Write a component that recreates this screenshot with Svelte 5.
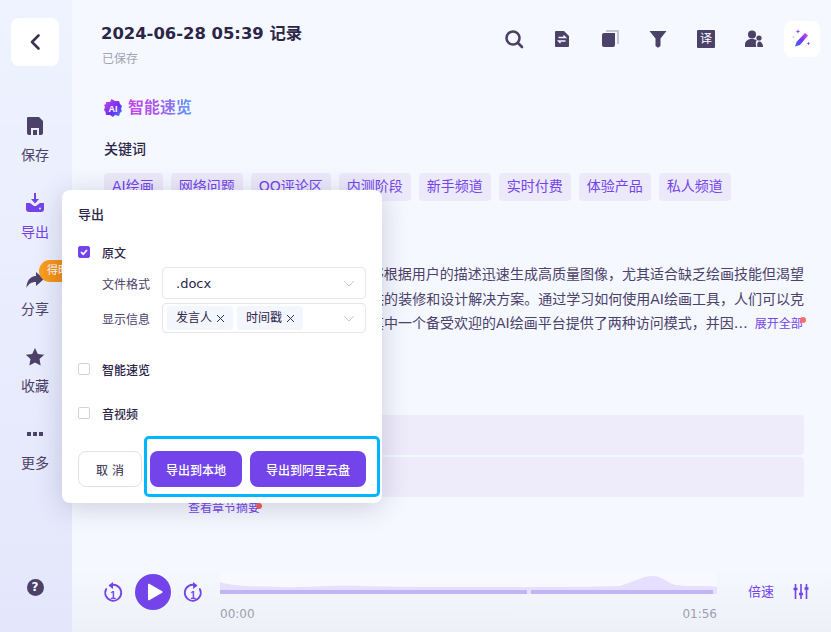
<script>
    const tags = ["AI绘画", "网络问题", "QQ评论区", "内测阶段", "新手频道", "实时付费", "体验产品", "私人频道"];
    const chips = ["发言人", "时间戳"];
    const ink = "#4b4169";
</script>

<div class="page">
    <aside class="side">
        <button class="back" aria-label="返回">
            <svg width="14" height="18" viewBox="0 0 14 18"><path d="M10.500 2.500 4 9l6.500 6.500" fill="none" stroke="#3a3155" stroke-width="2.600" stroke-linecap="round" stroke-linejoin="round" /></svg>
        </button>

        <nav class="nav">
            <div class="item">
                <svg width="20" height="20" viewBox="0 0 20 20"><path fill={ink} d="M3 1h11l4 4v12a2 2 0 0 1-2 2h-2v-7H6v7H4a2 2 0 0 1-2-2V2a1 1 0 0 1 1-1Zm5 13h4v5H8z" /></svg>
                <span>保存</span>
            </div>
            <div class="item active">
                <svg width="20" height="20" viewBox="0 0 20 20"><path fill="#7344ea" d="M9 0h2v6h3l-4 4.500L6 6h3ZM1 10h4l4 3h2l4-3h4v6a3 3 0 0 1-3 3H4a3 3 0 0 1-3-3Zm14 4.500a1 1 0 1 0 0 2 1 1 0 0 0 0-2Z" /></svg>
                <span>导出</span>
            </div>
            <div class="item">
                <svg width="20" height="20" viewBox="0 0 20 20"><path fill={ink} d="M11 2l8 7-8 7v-4C6 12 3.500 14 1.500 18 1.500 11 5 6.500 11 6Z" /></svg>
                <span>分享</span>
                <em class="badge">得时长</em>
            </div>
            <div class="item">
                <svg width="20" height="20" viewBox="0 0 20 20"><path fill={ink} d="m10 1 2.800 5.900 6.400.8-4.700 4.400 1.200 6.400L10 15.400l-5.700 3.100 1.200-6.400L.8 7.700l6.400-.8Z" /></svg>
                <span>收藏</span>
            </div>
            <div class="item">
                <svg width="20" height="20" viewBox="0 0 20 20"><path fill={ink} d="M2 8h4v4H2zm6 0h4v4H8zm6 0h4v4h-4z" /></svg>
                <span>更多</span>
            </div>
        </nav>

        <div class="help">?</div>
    </aside>

    <main class="main">
        <header class="top">
            <div>
                <h1>2024-06-28 05:39 记录</h1>
                <p class="saved">已保存</p>
            </div>
            <div class="tools">
                <svg width="20" height="20" viewBox="0 0 20 20"><circle cx="9" cy="9" r="6.500" fill="none" stroke={ink} stroke-width="2.600" /><path d="m14 14 4 4" stroke={ink} stroke-width="2.600" stroke-linecap="round" /></svg>
                <svg width="20" height="20" viewBox="0 0 20 20"><path fill={ink} d="M4 2h8l5 5v10a1 1 0 0 1-1 1H4a1 1 0 0 1-1-1V3a1 1 0 0 1 1-1Z" /><path d="M6.500 8.500h7l-2-2M13.500 12h-7l2 2" fill="none" stroke="#f5f8ff" stroke-width="1.300" /></svg>
                <svg width="20" height="20" viewBox="0 0 20 20"><path d="M6 2h12v13" fill="none" stroke="#b9b4cc" stroke-width="1.500" /><path fill={ink} d="M4 4h11v12a2 2 0 0 1-2 2H4a2 2 0 0 1-2-2V6a2 2 0 0 1 2-2Z" /></svg>
                <svg width="20" height="20" viewBox="0 0 20 20"><path fill={ink} d="M1.500 2h17l-6 7.500V17l-2 1.500H9.500l-2-1.500V9.500Z" /></svg>
                <span class="yi">译</span>
                <svg width="20" height="20" viewBox="0 0 20 20"><circle cx="8" cy="5.500" r="4" fill={ink} /><path fill={ink} d="M1 18v-2.500C1 12 4 10 8 10c2 0 3.500.5 4.700 1.500-1 1-1.200 3-.4 6.500Z" /><circle cx="15" cy="9" r="2.600" fill={ink} /><path fill={ink} d="M13.500 18c-.6-2.500-.4-5 1.500-5.500 2 0 4 2 4 5.500Z" /></svg>
                <div class="magic">
                    <svg width="20" height="20" viewBox="0 0 20 20">
                        <defs>
                            <linearGradient id="pen" x1="0" y1="1" x2="1" y2="0">
                                <stop offset="0" stop-color="#2f6df6" />
                                <stop offset="0.5" stop-color="#7a35f0" />
                                <stop offset="1" stop-color="#d04bf0" />
                            </linearGradient>
                        </defs>
                        <path fill="url(#pen)" d="M13 4l3 2.500L8 16l-5 1.500L4.500 13Z" />
                        <path fill="#8a3cf0" d="M6 0l.6 1.900L8.500 2.500 6.600 3.100 6 5 5.400 3.100 3.500 2.500 5.400 1.900ZM16.500 12.500l.5 1.500 1.500.5-1.500.5-.5 1.500-.5-1.500-1.500-.5 1.500-.5Z" />
                        <path fill="#d9b8fa" d="M1.500 6.500l.4 1.100 1.100.4-1.100.4-.4 1.100-.4-1.100L0 8l1.100-.4Z" />
                    </svg>
                </div>
            </div>
        </header>

        <div class="content">
            <div class="brand">
                <svg width="18" height="18" viewBox="0 0 18 18">
                    <defs>
                        <linearGradient id="ai" x1="0" y1="0" x2="1" y2="1">
                            <stop offset="0" stop-color="#d24be8" />
                            <stop offset="0.6" stop-color="#6a2ff0" />
                            <stop offset="1" stop-color="#3e8bf8" />
                        </linearGradient>
                    </defs>
                    <path fill="url(#ai)" d="M2 3h4l1.500-3L11 2h4l1 3 2 2-1 3 1 2-2 2-1 3-4-1-2 2-3-2H2l-.5-3L0 11l1-3-1-2 2-1Z" />
                    <text x="9" y="12.500" text-anchor="middle" class="ai-text">AI</text>
                </svg>
                <span>智能速览</span>
            </div>

            <h2>关键词</h2>
            <div class="tags">
                {#each tags as t}
                    <span class="tag">{t}</span>
                {/each}
            </div>

            <h2 class="sub">全文概要</h2>
            <p class="para">AI绘画技术正在改变人们的创作方式，它能够根据用户的描述迅速生成高质量图像，尤其适合缺乏绘画技能但渴望表达创意的用户，也能为家居和商业空间提供的装修和设计解决方案。通过学习如何使用AI绘画工具，人们可以克服技术门槛，获得更多新的收入来源途径。其中一个备受欢迎的AI绘画平台提供了两种访问模式，并因…<a class="more">展开全部<i></i></a></p>

            <h2 class="sub2">章节速览</h2>
            <div class="rows">
                <div class="row"></div>
                <div class="row"></div>
            </div>
            <a class="chapter">查看章节摘要<i></i></a>
        </div>

        <footer class="player">
            <svg class="skip" width="20" height="22" viewBox="0 0 20 22"><path d="M7 4.500A8 8 0 1 1 3.200 8" fill="none" stroke="#7344ea" stroke-width="1.800" stroke-linecap="round" /><path fill="#7344ea" d="M10 1v7L5.500 4.500Z" /><text x="10" y="17.500" text-anchor="middle" class="one">1</text></svg>
            <button class="play" aria-label="播放">
                <svg width="16" height="18" viewBox="0 0 16 18"><path fill="#fff" d="M1 1.500v15a.8.8 0 0 0 1.200.7l13-7.500a.8.8 0 0 0 0-1.400L2.200.8A.8.8 0 0 0 1 1.500Z" /></svg>
            </button>
            <svg class="skip" width="20" height="22" viewBox="0 0 20 22"><path d="M13 4.500A8 8 0 1 0 16.800 8" fill="none" stroke="#7344ea" stroke-width="1.800" stroke-linecap="round" /><path fill="#7344ea" d="M10 1v7l4.500-3.500Z" /><text x="10" y="17.500" text-anchor="middle" class="one">1</text></svg>

            <div class="track">
                <svg class="wave" width="497" height="22" viewBox="0 0 497 22">
                    <rect width="497" height="22" fill="#f8f8ff" />
                    <path fill="#e6dfff" d="M0 10C15 15 30 14 60 15S100 13 140 14 210 15 280 15 360 15 400 14C415 9 424 4 433 4 443 4 446 11 456 13S490 13 497 15V22H0Z" />
                    <rect y="18" width="497" height="4" fill="#c3b4f7" />
                    <rect x="307" y="18" width="4" height="4" fill="#e6dfff" />
                    <rect x="493" y="18" width="4" height="4" fill="#e6dfff" />
                </svg>
                <div class="times">
                    <span>00:00</span>
                    <span>01:56</span>
                </div>
            </div>

            <span class="speed">倍速</span>
            <svg class="eq" width="16" height="16" viewBox="0 0 16 16"><path d="M2.500 0v15M8 0v15M13.500 0v15" stroke="#7344ea" stroke-width="1.600" /><path d="M.5 5h4M6 10h4M11.500 4.500h4" stroke="#7344ea" stroke-width="2.600" /></svg>
        </footer>
    </main>

    <section class="pop">
        <h3>导出</h3>

        <label class="check"><span class="box on"><svg width="10" height="10" viewBox="0 0 10 10"><path d="m2 5 2.200 2.200L8 3" fill="none" stroke="#fff" stroke-width="1.700" /></svg></span>原文</label>
        <div class="field first">
            <span>文件格式</span>
            <div class="select">
                <span class="val">.docx</span>
                <svg class="arrow" width="12" height="7" viewBox="0 0 12 7"><path d="m1 1 5 5 5-5" fill="none" stroke="#c9c9d2" stroke-width="1" /></svg>
            </div>
        </div>
        <div class="field">
            <span>显示信息</span>
            <div class="select multi">
                {#each chips as c}
                    <span class="chip">{c}<svg width="9" height="9" viewBox="0 0 9 9"><path d="m1 1 7 7M8 1 1 8" stroke="#3a3155" stroke-width="1" /></svg></span>
                {/each}
                <svg class="arrow" width="12" height="7" viewBox="0 0 12 7"><path d="m1 1 5 5 5-5" fill="none" stroke="#c9c9d2" stroke-width="1" /></svg>
            </div>
        </div>

        <label class="check opt"><span class="box"></span>智能速览</label>
        <label class="check opt2"><span class="box"></span>音视频</label>

        <div class="actions">
            <button class="cancel">取 消</button>
            <button class="primary local">导出到本地</button>
            <button class="primary cloud">导出到阿里云盘</button>
        </div>
        <div class="mark"></div>
    </section>
</div>

<style>
    :global(body) {
        margin: 0;
    }

    .page {
        position: relative;
        display: flex;
        width: 831px;
        height: 632px;
        overflow: hidden;
        font-family: "DejaVu Sans", "Noto Sans CJK SC", sans-serif;
        color: #2c2548;
    }

    .side {
        width: 72px;
        flex: none;
        display: flex;
        flex-direction: column;
        align-items: center;
        background: linear-gradient(180deg, #eef3ff 0%, #e4e6fb 100%);
        padding: 18px 2px 0 0;
        box-sizing: border-box;
    }

    .back {
        width: 48px;
        height: 48px;
        border: none;
        border-radius: 8px;
        background: #fff;
        display: flex;
        align-items: center;
        justify-content: center;
        padding: 0;
    }

    .nav {
        margin-top: 50px;
        display: flex;
        flex-direction: column;
        gap: 25px;
    }

    .item {
        position: relative;
        height: 52px;
        display: flex;
        flex-direction: column;
        align-items: center;
        gap: 9px;
        font-size: 14px;
        line-height: 20px;
        color: #4b4169;
    }

    .item svg {
        flex: none;
    }

    .item.active {
        color: #7344ea;
    }

    .badge {
        position: absolute;
        left: 18px;
        top: -10px;
        width: 44px;
        height: 22px;
        padding-left: 8px;
        box-sizing: border-box;
        border-radius: 11px 0 0 11px;
        background: linear-gradient(90deg, #f9a020, #f07a0a);
        color: #fff;
        font-size: 11px;
        font-style: normal;
        line-height: 22px;
        white-space: nowrap;
        overflow: hidden;
    }

    .help {
        margin-top: auto;
        margin-bottom: 36px;
        width: 17px;
        height: 17px;
        border-radius: 50%;
        background: #4b4169;
        color: #fff;
        font-size: 12px;
        font-weight: 700;
        line-height: 17px;
        text-align: center;
    }

    .main {
        flex: 1;
        display: flex;
        flex-direction: column;
        min-width: 0;
        background: linear-gradient(180deg, #f5f8ff 90%, #eef0f8 100%);
    }

    .top {
        display: flex;
        justify-content: space-between;
        padding: 21px 11px 0 29px;
        height: 97px;
        box-sizing: border-box;
    }

    h1 {
        margin: 0;
        font-size: 16.400px;
        font-weight: 700;
        line-height: 26px;
        color: #2c2548;
    }

    .saved {
        margin: 3px 0 0 1px;
        font-size: 12px;
        line-height: 18px;
        color: #a5a3b5;
    }

    .tools {
        display: flex;
        align-items: center;
        height: 36px;
        gap: 28px;
    }

    .yi {
        width: 18px;
        height: 18px;
        margin: 0 1px;
        background: #4b4169;
        border-radius: 1px;
        color: #fff;
        font-size: 12px;
        line-height: 18px;
        text-align: center;
    }

    .magic {
        width: 36px;
        height: 36px;
        margin-left: -8px;
        border-radius: 8px;
        background: #fff;
        display: flex;
        align-items: center;
        justify-content: center;
    }

    .content {
        flex: 1;
        padding: 0 27px 0 32px;
        min-height: 0;
        position: relative;
    }

    .brand {
        display: flex;
        align-items: center;
        gap: 6px;
        height: 22px;
    }

    .brand span {
        font-size: 16px;
        font-weight: 700;
        line-height: 22px;
        background: linear-gradient(90deg, #c445e6, #a45cf0 50%, #5c9cf8);
        -webkit-background-clip: text;
        background-clip: text;
        color: transparent;
    }

    .ai-text {
        font-size: 9px;
        font-weight: 700;
        fill: #fff;
        font-family: "Liberation Sans", sans-serif;
    }

    h2 {
        margin: 18px 0 0;
        font-size: 14px;
        font-weight: 500;
        line-height: 24px;
        color: #2c2548;
    }

    .tags {
        display: flex;
        gap: 8px;
        margin-top: 12px;
    }

    .tag {
        height: 28px;
        padding: 0 8px;
        border-radius: 4px;
        background: #ece9fb;
        color: #7344ea;
        font-size: 14px;
        line-height: 27px;
        white-space: nowrap;
    }

    .tag:first-child {
        padding-right: 9px;
    }

    .sub {
        margin-top: 27px;
    }

    .para {
        margin: 10px 0 0;
        width: 700px;
        font-size: 14px;
        line-height: 24.500px;
        color: #4b4169;
        text-align: justify;
    }

    .more {
        position: relative;
        margin-left: 7px;
        font-size: 12px;
        color: #7344ea;
    }

    .more i {
        position: absolute;
        right: -3px;
        top: 0;
        width: 6px;
        height: 6px;
        border-radius: 50%;
        background: #ff6b6b;
    }

    .chapter i {
        position: absolute;
        right: -2px;
        top: 5px;
        width: 6px;
        height: 6px;
        border-radius: 50%;
        background: #f0605f;
    }

    .sub2 {
        margin-top: 48px;
    }

    .rows {
        display: flex;
        flex-direction: column;
        gap: 2px;
        margin-top: 6px;
    }

    .row {
        height: 40px;
        border-radius: 4px;
        background: #eeecfa;
    }

    .chapter {
        position: relative;
        display: inline-block;
        margin: 1px 0 0 84px;
        font-size: 12px;
        line-height: 20px;
        color: #7344ea;
    }

    .player {
        height: 61px;
        flex: none;
        display: flex;
        align-items: flex-start;
        padding: 0 23px 0 31px;
        box-sizing: border-box;
    }

    .skip {
        flex: none;
        margin-top: 10px;
    }

    .one {
        font-size: 10px;
        font-weight: 700;
        fill: #7344ea;
        font-family: "Liberation Sans", sans-serif;
    }

    .play {
        width: 36px;
        height: 36px;
        flex: none;
        margin: 3px 12px 0;
        padding: 0 0 0 3px;
        border: none;
        border-radius: 50%;
        background: #7344ea;
        display: flex;
        align-items: center;
        justify-content: center;
    }

    .track {
        width: 497px;
        margin: 1px 31px 0 17px;
        flex: none;
    }

    .wave {
        display: block;
    }

    .times {
        display: flex;
        justify-content: space-between;
        margin-top: 12px;
        font-size: 12px;
        line-height: 16px;
        color: #9f9db0;
    }

    .speed {
        flex: none;
        margin-top: 12px;
        margin-right: 19px;
        font-size: 13px;
        line-height: 18px;
        white-space: nowrap;
        color: #7344ea;
    }

    .eq {
        margin-top: 13px;
        flex: none;
    }

    /* export popover sits over the page */
    .pop {
        position: absolute;
        left: 62px;
        top: 190px;
        width: 320px;
        height: 313px;
        padding: 14px 16px 0;
        box-sizing: border-box;
        border-radius: 8px;
        background: #fff;
        box-shadow: 0 4px 28px rgba(40, 35, 80, 0.2);
    }

    h3 {
        margin: 0;
        font-size: 13px;
        font-weight: 500;
        line-height: 22px;
        color: #2c2548;
    }

    .check {
        display: flex;
        align-items: center;
        margin-top: 16px;
        height: 20px;
        font-size: 12px;
        font-weight: 500;
        color: #2c2548;
    }

    .box {
        width: 12px;
        height: 12px;
        margin-right: 12px;
        box-sizing: border-box;
        border: 1.500px solid #d3d1de;
        border-radius: 2px;
        display: flex;
        align-items: center;
        justify-content: center;
    }

    .box.on {
        background: #7344ea;
        border-color: #7344ea;
    }

    .field {
        display: flex;
        align-items: center;
        gap: 12px;
        margin: 4px 0 0 24px;
        font-size: 12px;
        color: #4b4169;
    }

    .field.first {
        margin-top: 5px;
    }

    .select {
        position: relative;
        flex: 1;
        height: 32px;
        border: 1px solid #e6e6ec;
        border-radius: 4px;
        box-sizing: border-box;
        display: flex;
        align-items: center;
        padding-left: 13px;
    }

    .multi {
        height: 30px;
        padding-left: 4px;
        gap: 4px;
    }

    .val {
        font-size: 13px;
        color: #2c2548;
    }

    .arrow {
        position: absolute;
        right: 10px;
        top: 50%;
        margin-top: -3px;
    }

    .chip {
        height: 24px;
        width: 66px;
        box-sizing: border-box;
        padding: 0 0 0 9px;
        border-radius: 4px;
        background: #f4f6fe;
        font-size: 12px;
        line-height: 24px;
        color: #2c2548;
        display: flex;
        align-items: center;
        gap: 4px;
    }

    .opt {
        margin-top: 26px;
    }

    .opt2 {
        margin-top: 24px;
    }

    .actions {
        display: flex;
        gap: 8px;
        margin-top: 28px;
    }

    .actions button {
        height: 36px;
        padding: 0;
        border-radius: 8px;
        font-family: inherit;
        font-size: 12px;
    }

    .cancel {
        width: 64px;
        box-sizing: border-box;
        border: 1px solid #e2e1ea;
        background: #fff;
        color: #2c2548;
    }

    .primary {
        border: none;
        background: #7344ea;
        color: #fff;
        font-weight: 500;
    }

    .local {
        width: 92px;
    }

    .cloud {
        width: 116px;
    }

    .mark {
        position: absolute;
        left: 82px;
        top: 246px;
        width: 236px;
        height: 61px;
        box-sizing: border-box;
        border: 3px solid #00b7ff;
        border-radius: 5px;
    }
</style>
